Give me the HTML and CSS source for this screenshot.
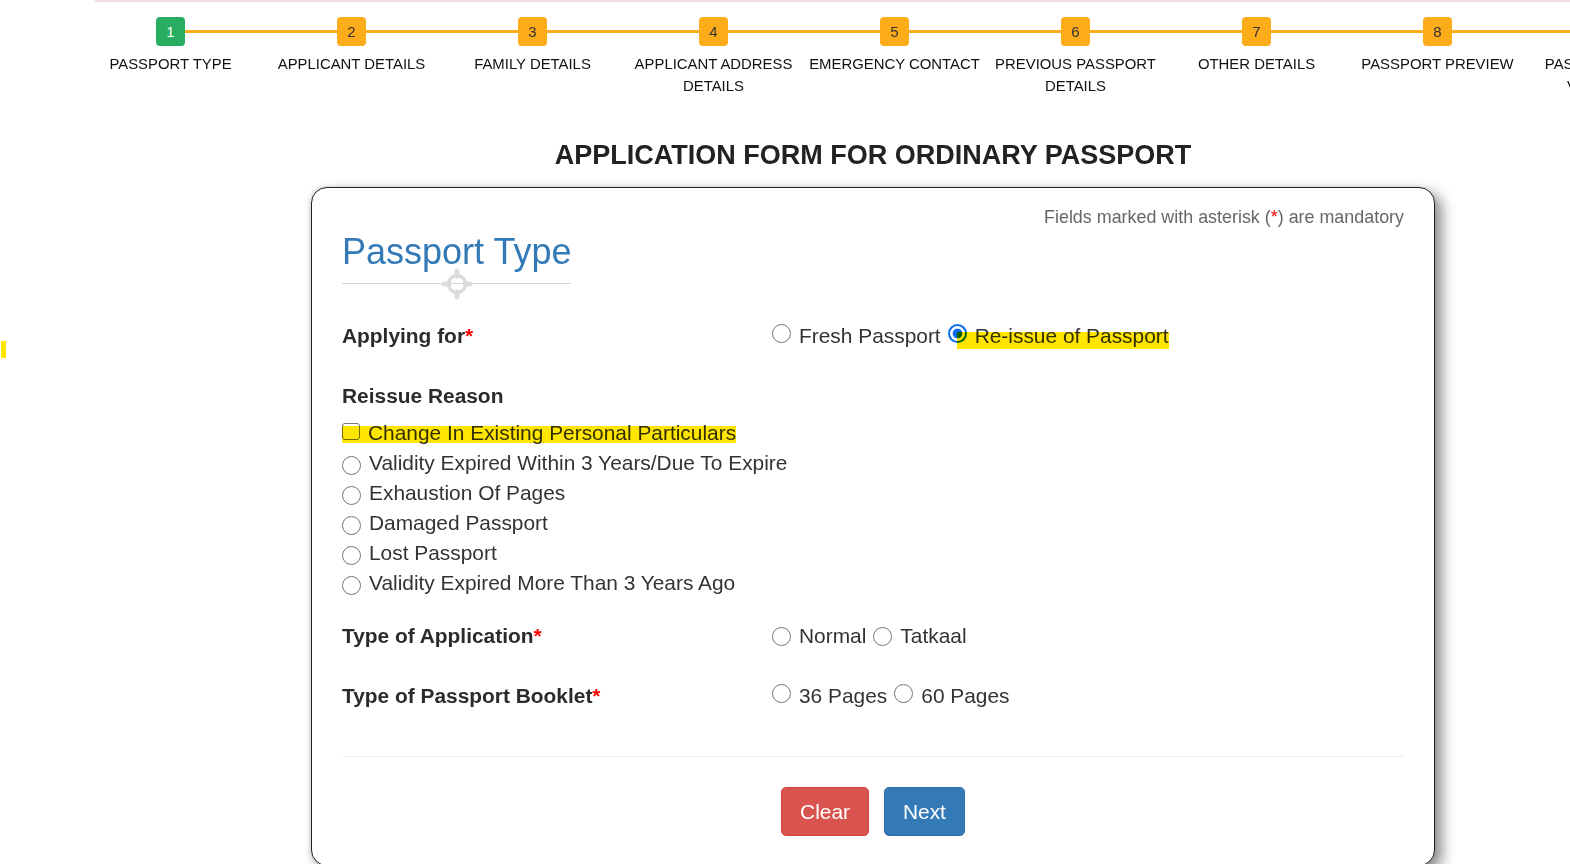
FILE: index.html
```html
<!DOCTYPE html>
<html lang="en">
<head>
<meta charset="utf-8">
<title>Application Form for Ordinary Passport</title>
<link rel="stylesheet" href="styles.css">
</head>
<body>
<div class="page">
  <div class="topbar"></div>

  <ol class="steps">
    <li class="step done"><span class="step-num">1</span><span class="step-label">Passport Type</span></li>
    <li class="step"><span class="step-num">2</span><span class="step-label">Applicant Details</span></li>
    <li class="step"><span class="step-num">3</span><span class="step-label">Family Details</span></li>
    <li class="step"><span class="step-num">4</span><span class="step-label">Applicant Address<br>Details</span></li>
    <li class="step"><span class="step-num">5</span><span class="step-label">Emergency Contact</span></li>
    <li class="step"><span class="step-num">6</span><span class="step-label">Previous Passport<br>Details</span></li>
    <li class="step"><span class="step-num">7</span><span class="step-label">Other Details</span></li>
    <li class="step"><span class="step-num">8</span><span class="step-label">Passport Preview</span></li>
    <li class="step"><span class="step-num">9</span><span class="step-label">Passport Fee And<br>Verification</span></li>
  </ol>

  <main class="main">
    <h1 class="form-title">APPLICATION FORM FOR ORDINARY PASSPORT</h1>

    <form class="card">
      <p class="mandatory-note">Fields marked with asterisk (<span class="req">*</span>) are mandatory</p>

      <div class="legend">
        <h2 class="legend-title">Passport Type</h2>
        <div class="legend-rule">
          <svg class="legend-icon" width="32" height="32" viewBox="0 0 32 32" aria-hidden="true">
            <circle cx="16" cy="16" r="8.5" fill="none" stroke="#dcdcdc" stroke-width="3.5"/>
            <g stroke="#dcdcdc" stroke-width="5" stroke-linecap="round">
              <line x1="16" y1="3" x2="16" y2="8"/>
              <line x1="16" y1="24" x2="16" y2="29"/>
              <line x1="3" y1="16" x2="8" y2="16"/>
              <line x1="24" y1="16" x2="29" y2="16"/>
            </g>
          </svg>
        </div>
      </div>

      <div class="form-row row-applying">
        <div class="field-label">Applying for<span class="req">*</span></div>
        <div class="choices">
          <label class="opt"><input type="radio" name="applying"><span>Fresh Passport</span></label>
          <label class="opt marked-opt">
            <input type="radio" name="applying" checked><span>Re-issue of Passport</span>
            <span class="mark mark-reissue"></span>
          </label>
        </div>
      </div>

      <div class="field-label reason-head">Reissue Reason</div>
      <ul class="reason-list">
        <li>
          <label class="opt marked-opt">
            <input type="checkbox"><span>Change In Existing Personal Particulars</span>
            <span class="mark mark-change"></span>
          </label>
        </li>
        <li><label class="opt"><input type="radio" name="reason"><span>Validity Expired Within 3 Years/Due To Expire</span></label></li>
        <li><label class="opt"><input type="radio" name="reason"><span>Exhaustion Of Pages</span></label></li>
        <li><label class="opt"><input type="radio" name="reason"><span>Damaged Passport</span></label></li>
        <li><label class="opt"><input type="radio" name="reason"><span>Lost Passport</span></label></li>
        <li><label class="opt"><input type="radio" name="reason"><span>Validity Expired More Than 3 Years Ago</span></label></li>
      </ul>

      <div class="form-row row-type">
        <div class="field-label">Type of Application<span class="req">*</span></div>
        <div class="choices">
          <label class="opt"><input type="radio" name="apptype"><span>Normal</span></label>
          <label class="opt"><input type="radio" name="apptype"><span>Tatkaal</span></label>
        </div>
      </div>

      <div class="form-row row-booklet">
        <div class="field-label">Type of Passport Booklet<span class="req">*</span></div>
        <div class="choices">
          <label class="opt"><input type="radio" name="booklet"><span>36 Pages</span></label>
          <label class="opt"><input type="radio" name="booklet"><span>60 Pages</span></label>
        </div>
      </div>

      <hr class="form-rule">

      <div class="actions">
        <button type="reset" class="btn btn-clear">Clear</button>
        <button type="button" class="btn btn-next">Next</button>
      </div>
    </form>
  </main>

  <span class="edge-mark"></span>
</div>
</body>
</html>
```

FILE: styles.css
```css
html, body {
  margin: 0;
  padding: 0;
}

body {
  width: 1570px;
  height: 864px;
  overflow: hidden;
  background: #fff;
  font-family: "Liberation Sans", Arial, sans-serif;
  color: #333;
}

.page {
  position: relative;
  width: 1570px;
}

.topbar {
  margin-left: 95px;
  height: 2px;
  background: #f2dede;
}

/* progress steps */
.steps {
  list-style: none;
  display: flex;
  margin: 15px 0 0 80px;
  padding: 0;
  width: 1700px;
}

.step {
  position: relative;
  flex: 0 0 181px;
  display: flex;
  flex-direction: column;
  align-items: center;
}

.step::after {
  content: "";
  position: absolute;
  top: 13px;
  left: 50%;
  width: 100%;
  height: 3px;
  background: #fcac19;
}

.step-num {
  position: relative;
  z-index: 1;
  width: 29px;
  height: 29px;
  border-radius: 4px;
  background: #fcac19;
  color: #333;
  font-size: 15px;
  display: flex;
  align-items: center;
  justify-content: center;
}

.step.done .step-num {
  background: #27ae60;
  color: #fff;
}

.step-label {
  margin-top: 7px;
  font-size: 14.9px;
  line-height: 22px;
  text-align: center;
  text-transform: uppercase;
  white-space: nowrap;
  color: #111;
}

/* main form */
.main {
  margin-left: 311px;
  width: 1124px;
}

.form-title {
  margin: 42px 0 0;
  font-size: 27px;
  line-height: 32px;
  font-weight: bold;
  text-align: center;
  color: #222;
}

.card {
  margin-top: 16px;
  border: 1px solid #222;
  border-radius: 16px;
  padding: 19px 30px 29px;
  box-shadow: 7px 6px 14px rgba(0, 0, 0, 0.45), -1px 0 4px rgba(0, 0, 0, 0.15);
  background: #fff;
}

.mandatory-note {
  margin: 0;
  font-size: 17.9px;
  line-height: 20px;
  text-align: right;
  color: #666;
}

.req {
  color: #f00;
}

.legend {
  display: inline-block;
  white-space: nowrap;
}

.legend-title {
  margin: 5px 0 0;
  font-size: 36px;
  line-height: 40px;
  font-weight: normal;
  color: #337ab7;
}

.legend-rule {
  position: relative;
  margin-top: 11px;
  height: 1px;
  background: #d4d4d4;
}

.legend-icon {
  position: absolute;
  left: calc(50% - 16px);
  top: -15px;
}

.form-row {
  display: grid;
  grid-template-columns: 430px 1fr;
  align-items: center;
  line-height: 30px;
}

.row-applying {
  margin-top: 37px;
}

.row-type {
  margin-top: 23px;
}

.row-booklet {
  margin-top: 30px;
}

.field-label {
  font-size: 20.9px;
  line-height: 30px;
  font-weight: bold;
  color: #2b2b2b;
}

.reason-head {
  margin-top: 30px;
}

.choices {
  display: flex;
  align-items: center;
  gap: 7px;
}

.opt {
  position: relative;
  display: inline-flex;
  align-items: center;
  font-size: 20.9px;
  line-height: 30px;
  color: #333;
}

.opt input {
  appearance: none;
  -webkit-appearance: none;
  flex: 0 0 auto;
  margin: 0 8px 0 0;
  width: 19px;
  height: 19px;
  border: 1.5px solid #767676;
  background: #fff;
}

.opt input[type="radio"] {
  border-radius: 50%;
}

.opt input[type="radio"]:checked {
  border: 2px solid #0b6cf3;
  background: radial-gradient(circle, #0b6cf3 0 4.6px, #fff 5.2px);
}

.opt input[type="checkbox"] {
  width: 18px;
  height: 17px;
  border-radius: 3px;
}

.row-applying .opt input,
.row-booklet .opt input {
  margin-top: -5px;
}

.reason-list {
  list-style: none;
  margin: 7px 0 0;
  padding: 0;
}

.reason-list li {
  height: 30px;
}

.reason-list .opt input[type="radio"] {
  margin-top: 4px;
}

.reason-list .opt input[type="checkbox"] {
  margin-top: -3px;
}

/* text highlighter marks */
.mark {
  position: absolute;
  right: 0;
  background: #ffe600;
  mix-blend-mode: multiply;
  pointer-events: none;
}

.mark-reissue {
  left: 9px;
  top: 11px;
  height: 17px;
}

.mark-change {
  left: 0;
  top: 8px;
  height: 17px;
}

.edge-mark {
  position: absolute;
  left: 1px;
  top: 341px;
  width: 5px;
  height: 17px;
  background: #ffe600;
}

.form-rule {
  margin: 45px 0 0;
  border: 0;
  border-top: 1px solid #eee;
}

.actions {
  display: flex;
  justify-content: center;
  gap: 15px;
  margin-top: 30px;
}

.btn {
  height: 49px;
  padding: 0 18px;
  border: 1px solid transparent;
  border-radius: 5px;
  font-family: "Liberation Sans", Arial, sans-serif;
  font-size: 20.9px;
  color: #fff;
  cursor: pointer;
}

.btn-clear {
  background: #d9534f;
  border-color: #d43f3a;
}

.btn-next {
  background: #337ab7;
  border-color: #2e6da4;
}
```
